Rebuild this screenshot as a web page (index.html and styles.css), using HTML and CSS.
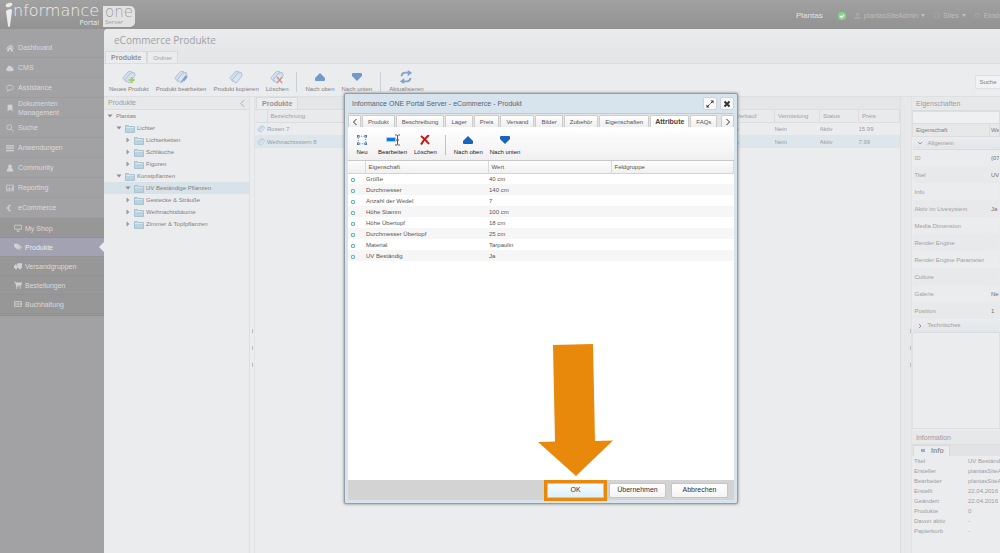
FILE: index.html
```html
<!DOCTYPE html>
<html lang="de">
<head>
	<meta charset="UTF-8">
	<title>Informance ONE Portal Server</title>
	<link rel="stylesheet" href="styles.css">
</head>
<body>

<!-- shared icons -->
<svg class="defs" width="0" height="0" aria-hidden="true">
	<symbol id="tag" viewBox="0 0 16 16">
		<path d="M1 9 7 2l4-.5 1 3.500-6 7.500-2 .5z" fill="#d3deea" stroke="#a9bfd8"/>
		<path d="m4 11 6-7.500 4-.5 1 3.500L9 14l-2 .5z" fill="#dbe5ef" stroke="#a3bcd8"/>
		<circle cx="12" cy="5.500" r="1" fill="#fff" stroke="#a3bcd8" stroke-width=".5"/>
	</symbol>
	<symbol id="folder" viewBox="0 0 10 9">
		<path d="M.5 1.500h3l1 1h5v6h-9z" fill="#bcd3df" stroke="#a9c3d1"/>
		<path d="M1 3.500h8" stroke="#d9e6ed"/>
	</symbol>
	<symbol id="up" viewBox="0 0 10 8"><path d="M5 0 10 5v2q0 1-1 1H1q-1 0-1-1V5z" fill="currentColor"/></symbol>
	<symbol id="down" viewBox="0 0 10 8"><path d="M5 8 0 3V1q0-1 1-1h8q1 0 1 1v2z" fill="currentColor"/></symbol>
	<symbol id="cross" viewBox="0 0 10 10"><path d="M1 1q4 3 8 8M9 0Q4 4 1 9.500" fill="none" stroke="currentColor" stroke-width="2"/></symbol>
	<symbol id="open" viewBox="0 0 6 6"><path d="M.5 1.500h5L3 4.500z" fill="#8d8e90"/></symbol>
	<symbol id="closed" viewBox="0 0 6 6"><path d="M1.500.5v5l3-2.500z" fill="#97989a"/></symbol>
</svg>

<header class="top">
	<a class="logo" href="#" aria-label="informance one Portal Server">
		<svg class="logo-i" viewBox="0 0 8 26"><ellipse cx="4" cy="3" rx="3.500" ry="2" transform="rotate(-20 4 3)"/><path d="M1 9q2-2 5-2 1 0 1 2L5 24q-1 2-2 0z"/></svg>
		<span class="logo-left">nformance<small>Portal</small></span>
		<span class="logo-right">one<small>Server</small></span>
	</a>
	<nav class="top-nav">
		<span class="site">Plantas</span>
		<svg class="ok" viewBox="0 0 8 8"><circle cx="4" cy="4" r="4" fill="#86d68b"/><path d="m2 4 1.500 1.500L6 3" fill="none" stroke="#fff" stroke-width="1.200"/></svg>
		<a href="#"><svg viewBox="0 0 8 8"><circle cx="4" cy="2.500" r="2"/><path d="M0 8q0-3 4-3t4 3z"/></svg>plantasSiteAdmin<i class="caret"></i></a>
		<a href="#"><svg viewBox="0 0 8 8"><circle cx="4" cy="4" r="3" class="ring"/></svg>Sites<i class="caret"></i></a>
		<a href="#"><svg viewBox="0 0 8 8"><circle cx="4" cy="4" r="2.500" class="ring"/></svg>Einstellungen</a>
	</nav>
</header>

<div class="app">
	<nav class="side">
		<ul>
			<li><a href="#"><svg viewBox="0 0 10 10"><path d="M5 1 0 5.500l.7.700L5 2.500l4.300 3.700.7-.7-2-1.800V1H7v1.700zM5 3.500 1.500 6.500V9.500H4V7h2v2.500h2.500v-3z"/></svg>Dashboard</a></li>
			<li><a href="#"><svg viewBox="0 0 10 10"><path d="M2.500 9a2.300 2.300 0 0 1-1-4.300 3 3 0 0 1 5.500-1 2 2 0 0 1 2 2A2 2 0 0 1 8 9z"/></svg>CMS</a></li>
			<li><a href="#"><svg viewBox="0 0 10 10"><path d="M5 1.500c6 0 6 6 0 6H4L2 9V7C-1 5 1 1.500 5 1.500z" class="line"/></svg>Assistance</a></li>
			<li><a href="#"><svg viewBox="0 0 10 10"><path d="M2 1h6v8.500L5 6.500l-3 3z"/></svg><span>Dokumenten Management</span></a></li>
			<li><a href="#"><svg viewBox="0 0 10 10"><circle cx="4" cy="4" r="3" class="line"/><path d="m6 6 3.500 3.500" class="line"/></svg>Suche</a></li>
			<li><a href="#"><svg viewBox="0 0 10 10"><path d="M0 1.500h10V3H0zM0 4.500h10V6H0zM0 7.500h10V9H0z"/></svg>Anwendungen</a></li>
			<li><a href="#"><svg viewBox="0 0 10 10"><circle cx="5" cy="3" r="2.300"/><path d="M1 9.500q0-4 2.500-4.500h3Q9 5.500 9 9.500z"/></svg>Community</a></li>
			<li><a href="#"><svg viewBox="0 0 10 10"><path d="M.5 1.500h9v7h-9z" class="line"/><path d="M2 5h1v2.500H2zM4 4h1v3.500H4zM6 5h1v2.500H6zM7.500 3h1v4.500h-1z"/></svg>Reporting</a></li>
			<li><a href="#"><svg viewBox="0 0 10 10"><path d="M6 1.700C1.500.5 1.500 9.500 6 8.300" class="line thick"/><path d="M0 4h5v.8H0zM0 5.600h4.500v.8H0z"/></svg>eCommerce</a></li>
		</ul>
		<ul class="sub">
			<li><a href="#"><svg viewBox="0 0 10 10"><path d="M.5 1.500h9v5h-9zM3 9h4M5 7v2" class="line"/></svg>My Shop</a></li>
			<li class="active"><a href="#"><svg viewBox="0 0 10 10"><path d="M0 1h3.500l4 4L5 8.500l-5-4zM5 1l4.800 4L7 8.800l-.7-.7L8 5 4 1z"/></svg>Produkte</a></li>
			<li><a href="#"><svg viewBox="0 0 10 10"><path d="M4 1.500h6v6H4zM1.500 3H3.500v4.500H0V5z"/><circle cx="2.500" cy="8" r="1.300"/><circle cx="7.500" cy="8" r="1.300"/></svg>Versandgruppen</a></li>
			<li><a href="#"><svg viewBox="0 0 10 10"><path d="M0 1h2l.5 1H10L9 5.500 3.500 6v.8H9v.7H2.700L1.500 2H0z"/><circle cx="3.500" cy="8.800" r="1"/><circle cx="8" cy="8.800" r="1"/></svg>Bestellungen</a></li>
			<li><a href="#"><svg viewBox="0 0 10 10"><path d="M.5 2h9v6h-9z" class="line"/><circle cx="5" cy="5" r="1.500" class="line"/><path d="M1 3.500h1v3H1zM8 3.500h1v3H8z"/></svg>Buchhaltung</a></li>
		</ul>
	</nav>

	<main class="main">
		<h1>eCommerce Produkte</h1>
		<div class="tabs main-tabs">
			<button class="tab on">Produkte</button>
			<button class="tab">Ordner</button>
		</div>
		<div class="toolbar">
			<button><svg viewBox="0 0 16 16"><use href="#tag"/><path d="M11 8v7M7.500 11.500h7" stroke="#a5cf74" stroke-width="2.500"/></svg>Neues Produkt</button>
			<button><svg viewBox="0 0 16 16"><use href="#tag"/><path d="m14.500 7-4 5" stroke="#7f9ecb" stroke-width="3"/><path d="M8 14l1-3 2 2z" fill="#7f9ecb"/></svg>Produkt bearbeiten</button>
			<button><svg viewBox="0 0 16 16"><use href="#tag"/></svg>Produkt kopieren</button>
			<button><svg viewBox="0 0 16 16"><use href="#tag"/><path d="m8 8 6 7m0-7-6 7" stroke="#d88d88" stroke-width="1.500"/></svg>Löschen</button>
			<i class="sep"></i>
			<button><svg class="arr" viewBox="0 0 10 8"><use href="#up"/></svg>Nach oben</button>
			<button><svg class="arr" viewBox="0 0 10 8"><use href="#down"/></svg>Nach unten</button>
			<i class="sep"></i>
			<button><svg viewBox="0 0 16 16"><path d="M3 7q0-4 5-4h3M13 9q0 4-5 4H5" fill="none" stroke="#83a4cd" stroke-width="2.200"/><path d="m10 0 5 3-5 4zM6 9l-5 4 5 3z" fill="#83a4cd"/></svg>Aktualisieren</button>
			<button class="search">Suche</button>
		</div>

		<div class="work">
			<section class="tree">
				<h2>Produkte<svg viewBox="0 0 6 8"><path d="M5 0 1 4l4 4" fill="none" stroke="#9fa0a2"/></svg></h2>
				<ul>
					<li><svg class="tw"><use href="#open"/></svg>Plantas</li>
					<li class="l1"><svg class="tw"><use href="#open"/></svg><svg class="fo"><use href="#folder"/></svg>Lichter</li>
					<li class="l2"><svg class="tw"><use href="#closed"/></svg><svg class="fo"><use href="#folder"/></svg>Lichterketten</li>
					<li class="l2"><svg class="tw"><use href="#closed"/></svg><svg class="fo"><use href="#folder"/></svg>Schläuche</li>
					<li class="l2"><svg class="tw"><use href="#closed"/></svg><svg class="fo"><use href="#folder"/></svg>Figuren</li>
					<li class="l1"><svg class="tw"><use href="#open"/></svg><svg class="fo"><use href="#folder"/></svg>Kunstpflanzen</li>
					<li class="l2 sel"><svg class="tw"><use href="#open"/></svg><svg class="fo"><use href="#folder"/></svg>UV Beständige Pflanzen</li>
					<li class="l2"><svg class="tw"><use href="#closed"/></svg><svg class="fo"><use href="#folder"/></svg>Gestecke &amp; Sträuße</li>
					<li class="l2"><svg class="tw"><use href="#closed"/></svg><svg class="fo"><use href="#folder"/></svg>Weihnachtsbäume</li>
					<li class="l2"><svg class="tw"><use href="#closed"/></svg><svg class="fo"><use href="#folder"/></svg>Zimmer &amp; Topfpflanzen</li>
				</ul>
			</section>
			<div class="split"><i></i><i></i><i></i></div>

			<section class="list">
				<div class="tabs list-tabs"><button class="tab on">Produkte</button></div>
				<table class="grid">
					<colgroup><col class="c-icon"><col><col class="c-sale"><col class="c-rent"><col class="c-state"><col class="c-price"></colgroup>
					<thead><tr><th></th><th>Bezeichnung</th><th>Verkauf</th><th>Vermietung</th><th>Status</th><th>Preis</th></tr></thead>
					<tbody>
						<tr><td><svg class="mini"><use href="#tag"/></svg></td><td>Rosen 7</td><td>Ja</td><td>Nein</td><td>Aktiv</td><td>15.99</td></tr>
						<tr class="sel"><td><svg class="mini"><use href="#tag"/></svg></td><td>Weihnachtsstern 8</td><td>Ja</td><td>Nein</td><td>Aktiv</td><td>7.99</td></tr>
					</tbody>
				</table>
			</section>
			<div class="split wide"><i></i><i></i><i></i></div>

			<aside class="props">
				<h2>Eigenschaften</h2>
				<input class="filter" type="text" aria-label="Filter">
				<table class="prop-table">
					<thead><tr><th>Eigenschaft</th><th>We</th></tr></thead>
					<tbody>
						<tr class="group"><td colspan="2"><svg viewBox="0 0 6 6"><path d="m1 2 2 2 2-2"/></svg>Allgemein</td></tr>
						<tr><td>ID</td><td class="val">{07</td></tr>
						<tr><td>Titel</td><td class="val">UV</td></tr>
						<tr><td>Info</td><td></td></tr>
						<tr><td>Aktiv im Livesystem</td><td class="val">Ja</td></tr>
						<tr><td>Media Dimension</td><td></td></tr>
						<tr><td>Render Engine</td><td></td></tr>
						<tr><td>Render Engine Parameter</td><td></td></tr>
						<tr><td>Culture</td><td></td></tr>
						<tr><td>Galerie</td><td class="val">Ne</td></tr>
						<tr><td>Position</td><td class="val">1</td></tr>
						<tr class="group"><td colspan="2"><svg viewBox="0 0 6 6"><path d="m2 1 2 2-2 2"/></svg>Technisches</td></tr>
					</tbody>
				</table>
				<div class="rest"></div>
				<h2 class="info-head">Information</h2>
				<div class="tabs info-tabs"><button class="tab on"><i></i>Info</button></div>
				<table class="info">
					<tr><td>Titel</td><td>UV Beständige Pflanzen</td></tr>
					<tr><td>Ersteller</td><td>plantasSiteAdmin</td></tr>
					<tr><td>Bearbeiter</td><td>plantasSiteAdmin</td></tr>
					<tr><td>Erstellt</td><td>22.04.2016</td></tr>
					<tr><td>Geändert</td><td>22.04.2016</td></tr>
					<tr><td>Produkte</td><td>0</td></tr>
					<tr><td>Davon aktiv</td><td>-</td></tr>
					<tr><td>Papierkorb</td><td>-</td></tr>
				</table>
			</aside>
		</div>
	</main>
</div>

<div class="dialog" role="dialog" aria-labelledby="dlg-title">
	<div class="dlg-title">
		<span id="dlg-title">Informance ONE Portal Server - eCommerce - Produkt</span>
		<button aria-label="Maximieren"><svg viewBox="0 0 8 8"><path d="M1.500 6.500l5-5" stroke="#333" stroke-dasharray="3 1.100"/><path d="M4.500.5h3v3zM.5 4.500v3h3z" fill="#333"/></svg></button>
		<button aria-label="Schließen"><svg viewBox="0 0 8 8"><path d="m1.500 1.500 5 5m0-5-5 5" stroke="#333" stroke-width="2"/></svg></button>
	</div>
	<div class="tabs dlg-tabs">
		<button class="tab scroll" aria-label="Zurück"><svg viewBox="0 0 6 8"><path d="M4.500 1 1.500 4l3 3"/></svg></button>
		<button class="tab">Produkt</button>
		<button class="tab">Beschreibung</button>
		<button class="tab">Lager</button>
		<button class="tab">Preis</button>
		<button class="tab">Versand</button>
		<button class="tab">Bilder</button>
		<button class="tab">Zubehör</button>
		<button class="tab">Eigenschaften</button>
		<button class="tab on">Attribute</button>
		<button class="tab">FAQs</button>
		<button class="tab scroll next" aria-label="Weiter"><svg viewBox="0 0 6 8"><path d="m1.500 1 3 3-3 3"/></svg></button>
	</div>
	<div class="toolbar">
		<button><svg class="arr" viewBox="0 0 12 12"><path d="M1.500 1.500h9v9h-9z" fill="none" stroke="#5b83bd" stroke-dasharray="1.500 1.500"/><path d="M0 0h3v3H0zM9 0h3v3H9zM0 9h3v3H0zM9 9h3v3H9z" fill="#3d70bb"/><path d="M1 1h1v1H1zM10 1h1v1h-1zM1 10h1v1H1zM10 10h1v1h-1z" fill="#fff"/></svg>Neu</button>
		<button><svg viewBox="0 0 14 12"><path d="M0 3h10v5H0z" fill="#a9cef5"/><path d="M1 4h8v3H1z" fill="#0b79ee"/><path d="M9 1h1.500l1 .5 1-.5H14M11.500 1.500v9M9 11h1.500l1-.5 1 .5H14M10 6h3" fill="none" stroke="#555"/></svg>Bearbeiten</button>
		<button class="red"><svg class="arr" viewBox="0 0 10 10"><use href="#cross"/></svg>Löschen</button>
		<i class="sep"></i>
		<button><svg class="arr" viewBox="0 0 10 8"><use href="#up"/></svg>Nach oben</button>
		<button><svg class="arr" viewBox="0 0 10 8"><use href="#down"/></svg>Nach unten</button>
	</div>
	<div class="dlg-body">
		<table class="attr">
			<colgroup><col class="a-icon"><col class="a-name"><col class="a-val"><col></colgroup>
			<thead><tr><th></th><th>Eigenschaft</th><th>Wert</th><th>Feldgruppe</th></tr></thead>
			<tbody>
				<tr><td><i></i></td><td>Größe</td><td>40 cm</td><td></td></tr>
				<tr><td><i></i></td><td>Durchmesser</td><td>140 cm</td><td></td></tr>
				<tr><td><i></i></td><td>Anzahl der Wedel</td><td>7</td><td></td></tr>
				<tr><td><i></i></td><td>Höhe Stamm</td><td>100 cm</td><td></td></tr>
				<tr><td><i></i></td><td>Höhe Übertopf</td><td>18 cm</td><td></td></tr>
				<tr><td><i></i></td><td>Durchmesser Übertopf</td><td>25 cm</td><td></td></tr>
				<tr><td><i></i></td><td>Material</td><td>Tarpaulin</td><td></td></tr>
				<tr><td><i></i></td><td>UV Beständig</td><td>Ja</td><td></td></tr>
			</tbody>
		</table>
	</div>
	<div class="dlg-foot">
		<button class="primary">OK</button>
		<button>Übernehmen</button>
		<button>Abbrechen</button>
	</div>
	<svg class="pointer" viewBox="0 0 75 133" aria-hidden="true"><path d="M15 1 55 0l2 97 18-.5L38 132 0 98l17-.5z" fill="#e8890c"/></svg>
</div>

</body>
</html>
```
FILE: styles.css
```css
* {
	box-sizing: border-box;
}
body {
	margin: 0;
	min-height: 100vh;
	display: flex;
	flex-direction: column;
	overflow: hidden;
	background: #a2a2a4;
	font: 6px/10px "Liberation Sans", Arial, sans-serif;
	color: #808183;
	white-space: nowrap;
}
ul {
	list-style: none;
	margin: 0;
	padding: 0;
}
a {
	color: inherit;
	text-decoration: none;
}
button,
input {
	font: inherit;
	color: inherit;
	margin: 0;
	padding: 0;
	border: 0;
	background: none;
}
svg {
	display: block;
	flex: none;
}
table {
	border-collapse: collapse;
	table-layout: fixed;
	width: 100%;
}
th,
td {
	padding: 0;
	text-align: left;
	font-weight: normal;
	overflow: hidden;
}
h1,
h2 {
	margin: 0;
	font-weight: normal;
}
.defs {
	position: absolute;
}

/* top bar */
.top {
	height: 29px;
	display: flex;
	justify-content: space-between;
	background: linear-gradient(#a1a1a2, #929293);
}
.logo {
	display: flex;
	padding-left: 5px;
	color: #ebebec;
	font: 200 16px/16px "DejaVu Sans", sans-serif;
}
.logo small {
	display: block;
	font: 7px/8px "Open Sans", sans-serif;
}
.logo-i {
	width: 8px;
	height: 26px;
	margin-top: 2px;
	fill: #ebebec;
}
.logo-left {
	padding-top: 3px;
	text-align: right;
}
.logo-right {
	height: 21px;
	margin: 6px 0 0 4px;
	padding: 0 2px;
	background: #e2e2e3;
	border-radius: 0 5px 5px 0;
	color: #a0a0a2;
	font-size: 15px;
	line-height: 13px;
}
.logo-right small {
	font-size: 6px;
	line-height: 7px;
}
.top-nav {
	width: 204px;
	display: flex;
	align-items: center;
	gap: 8px;
	padding-top: 2px;
	overflow: hidden;
	font-size: 7px;
	color: #bdbdbe;
}
.top-nav a {
	display: flex;
	align-items: center;
	gap: 3px;
}
.top-nav svg {
	width: 7px;
	height: 7px;
	fill: #a6a6a7;
}
.top-nav .ok {
	width: 8px;
	height: 8px;
	margin-left: 7px;
}
.top-nav .ring {
	fill: none;
	stroke: #a8a8a9;
}
.site {
	font: 8px/10px "Liberation Sans", Arial, sans-serif;
	color: #e2e2e3;
}
.caret {
	border: 2px solid transparent;
	border-top: 3px solid #c0c0c1;
	border-bottom: 0;
}

/* side menu */
.app {
	flex: 1;
	display: flex;
}
.side {
	width: 104px;
	flex: none;
	padding-top: 9px;
	font-size: 7px;
	line-height: 9px;
	color: #dadadb;
}
.side a {
	height: 20px;
	display: flex;
	align-items: center;
	gap: 4px;
	padding-left: 6px;
	border-bottom: 1px solid #9c9c9e;
}
.side span {
	white-space: normal;
	width: 50px;
}
.side svg {
	width: 8px;
	height: 8px;
	fill: #d2d2d3;
}
.side .line {
	fill: none;
	stroke: #d2d2d3;
}
.side .thick {
	stroke-width: 1.5;
}
.sub {
	padding: 1px 0;
	background: #979798;
	border-bottom: 1px solid #8e8e90;
}
.sub a {
	height: 19px;
	gap: 3px;
	padding-left: 14px;
	border-bottom-color: #929294;
}
.sub .active a {
	position: relative;
	background: #a2a2b2;
	color: #ededf0;
}
.sub .active a:after {
	content: "";
	position: absolute;
	right: 0;
	top: 4px;
	border: 5px solid transparent;
	border-left: 0;
	border-right-color: #ebecee;
}

/* tabs and toolbars */
.tabs {
	display: flex;
	align-items: flex-end;
}
.tab {
	height: 12px;
	padding: 0 5px;
	border: 1px solid #d9dadc;
	border-bottom: 0;
	background: #ebecee;
	color: #a0a1a3;
}
.tab.on {
	font-size: 7px;
	font-weight: bold;
	color: #949597;
}
.toolbar {
	height: 33px;
	display: flex;
	align-items: center;
	gap: 1px;
	padding: 3px 2px 0;
	border-bottom: 1px solid #dedfe1;
}
.toolbar button {
	min-width: 24px;
	display: flex;
	flex-direction: column;
	align-items: center;
	padding: 0 3px;
}
.toolbar svg {
	width: 14px;
	height: 14px;
}
.toolbar .arr {
	width: 10px;
	height: 10px;
	margin: 2px 0;
	color: #7398cc;
}
.sep {
	width: 1px;
	height: 20px;
	margin: 0 4px;
	background: #c9d0d8;
}
.toolbar .search {
	height: 14px;
	width: 25px;
	margin: 0 -2px 0 auto;
	border: 1px solid #dfe0e1;
	border-right: 0;
	background: #f1f2f3;
	justify-content: center;
}

/* main area */
.main {
	flex: 1;
	min-width: 0;
	display: flex;
	flex-direction: column;
	background: #ebecee;
	border-top-left-radius: 4px;
}
.main h1 {
	height: 22px;
	padding-left: 10px;
	background: linear-gradient(#ebecee, #e5e6e8);
	border-top-left-radius: 4px;
	font: 10px/22px "Open Sans", sans-serif;
	color: #a0a1a3;
}
.main-tabs {
	height: 13px;
	padding-left: 1px;
	background: #e5e6e8;
	border-bottom: 1px solid #dcdddf;
}
.main h2 {
	height: 13px;
	padding: 0 4px;
	border-bottom: 1px solid #dcdddf;
	background: #e7e8ea;
	font-size: 7px;
	line-height: 14px;
	color: #9d9ea0;
}
.work {
	flex: 1;
	display: flex;
}
.tree {
	width: 146px;
	flex: none;
	border-right: 1px solid #dddee0;
}
.main .tree h2 {
	display: flex;
	align-items: center;
	justify-content: space-between;
}
.tree h2 svg {
	width: 5px;
	height: 7px;
}
.tree li {
	height: 12px;
	display: flex;
	align-items: center;
	padding-left: 3px;
}
.tree .l1 {
	padding-left: 12px;
}
.tree .l2 {
	padding-left: 21px;
}
.tree .sel {
	background: #d8e2e9;
}
.tw {
	width: 6px;
	height: 6px;
	margin-right: 3px;
}
.fo {
	width: 10px;
	height: 9px;
	margin-right: 2px;
}
.split {
	width: 5px;
	display: flex;
	flex-direction: column;
	align-items: center;
	justify-content: center;
	gap: 13px;
	padding-top: 46px;
	border-right: 1px solid #e1e2e4;
}
.split i {
	width: 1px;
	height: 4px;
	background: #bdbec0;
}
.split.wide {
	width: 12px;
	padding-left: 9px;
	border-left: 1px solid #dddee0;
	background: #e7e8ea;
}
.list {
	flex: 1;
}
.list-tabs {
	height: 13px;
	padding-left: 1px;
	background: #e5e6e8;
	border-bottom: 1px solid #dcdddf;
}
.grid th {
	height: 12px;
	padding-left: 3px;
	background: #e9eaec;
	border-right: 1px solid #dcdddf;
	border-bottom: 1px solid #dcdddf;
	color: #a0a1a3;
}
.grid td {
	height: 13px;
	color: #9b9c9e;
}
.grid .sel {
	background: #dce6eb;
}
.c-icon {
	width: 12px;
}
.c-sale {
	width: 42px;
}
.c-rent {
	width: 45px;
}
.c-state {
	width: 39px;
}
.c-price {
	width: 41px;
}
.mini {
	width: 8px;
	height: 8px;
	margin-left: 2px;
}

/* properties */
.props {
	width: 88px;
	flex: none;
	overflow: hidden;
}
.main .props h2 {
	height: 14px;
}
.filter {
	display: block;
	width: 100%;
	height: 13px;
	border: 1px solid #dcdddf;
	background: #eff0f1;
}
.prop-table th {
	height: 12px;
	padding-left: 3px;
	border: 1px solid #dcdddf;
	border-top: 0;
	background: #e7e8ea;
}
.prop-table th:last-child {
	width: 10px;
	padding-left: 1px;
}
.prop-table td {
	height: 17px;
	padding-left: 2px;
	border-right: 1px solid #e9eaec;
	color: #9fa0a2;
}
.prop-table tr:nth-child(odd) td {
	background: #e8e9eb;
}
.prop-table .val {
	padding-left: 1px;
	color: #707173;
}
.prop-table tr.group td {
	height: 13px;
	background: linear-gradient(#ebecee, #e1e5ea);
	border-bottom: 1px solid #d7dce1;
}
.group svg {
	display: inline-block;
	width: 6px;
	height: 6px;
	margin: 0 5px 0 2px;
	vertical-align: middle;
	fill: none;
	stroke: #999a9c;
}
.rest {
	height: 96px;
	border: 1px solid #dedfe1;
	border-top: 0;
	margin-bottom: 2px;
}
.info-tabs {
	padding: 0 1px;
	height: 11px;
	background: #e2e3e5;
}
.info-tabs .tab {
	height: 11px;
}
.info-tabs i {
	display: inline-block;
	width: 4px;
	height: 3px;
	margin: 0 6px 1px 2px;
	background: #8fb2cf;
}
.info td {
	height: 10px;
	padding-left: 2px;
	color: #9c9d9f;
}
.info td:last-child {
	width: 34px;
}

/* dialog */
.dialog {
	position: absolute;
	left: 344px;
	top: 93px;
	width: 394px;
	height: 411px;
	display: flex;
	flex-direction: column;
	padding: 0 3px 3px;
	border: 1px solid #969ca3;
	border-radius: 2px;
	background: #d8e4ed;
	box-shadow: 0 0 3px #77797c;
	color: #555;
}
.dlg-title {
	height: 19px;
	display: flex;
	align-items: center;
	gap: 3px;
	padding: 0 0 0 4px;
	font-size: 7px;
	color: #59636d;
}
.dlg-title span {
	flex: 1;
}
.dlg-title button {
	width: 14px;
	height: 13px;
	display: flex;
	align-items: center;
	justify-content: center;
	border: 1px solid #d0d4d8;
	border-radius: 2px;
	background: #f8f8f8;
}
.dlg-title svg {
	width: 8px;
	height: 8px;
}
.dlg-tabs {
	height: 14px;
	gap: 1px;
	background: #e4e4e4;
	border-top: 1px solid #c4c9cd;
}
.dlg-tabs .tab {
	border-color: #cdcdcd;
	border-radius: 2px 2px 0 0;
	background: linear-gradient(#fff, #efefef);
	color: #555;
}
.dlg-tabs .tab.on {
	padding: 0 4px;
	background: #fff;
	color: #444;
}
.dlg-tabs .scroll {
	width: 13px;
	padding: 0 3px;
}
.dlg-tabs .next {
	margin-left: auto;
}
.scroll svg {
	width: 6px;
	height: 8px;
	fill: none;
	stroke: #333;
}
.dialog .toolbar {
	height: 34px;
	background: linear-gradient(#fff, #f0f0f0);
	border-bottom-color: #c8c8c8;
	color: #222;
}
.dialog .toolbar .arr {
	color: #1b62bd;
}
.dialog .toolbar .red .arr {
	color: #c6150f;
}
.dialog .sep {
	background: #b5c6d8;
}
.dlg-body {
	flex: 1;
	background: #fff;
}
.attr th {
	height: 12px;
	padding-left: 3px;
	background: linear-gradient(#fcfcfc, #f0f0f0);
	border-right: 1px solid #d9d9d9;
	border-bottom: 1px solid #d4d4d4;
}
.attr td {
	height: 11px;
	padding-left: 1px;
}
.attr tr:nth-child(even) td {
	background: #f6f6f6;
}
.attr i {
	display: block;
	width: 4px;
	height: 4px;
	margin: 2px 0 0 2px;
	border: 1px solid #69b5bb;
	border-radius: 1px;
	background: #dff3f4;
}
.a-icon {
	width: 17px;
}
.a-name {
	width: 123px;
}
.a-val {
	width: 123px;
}
.dlg-foot {
	height: 20px;
	display: flex;
	align-items: center;
	justify-content: flex-end;
	gap: 5px;
	padding-right: 6px;
	background: #d3d3d3;
	font-size: 7px;
	color: #333;
}
.dlg-foot button {
	width: 57px;
	height: 15px;
	border: 1px solid #c6c6c6;
	border-radius: 2px;
	background: linear-gradient(#fff, #f3f3f3);
}
.dlg-foot .primary {
	border-color: #a9cfe0;
	border-radius: 0;
	outline: 3px solid #e8890c;
	background: linear-gradient(#f6fcff, #dcf0fa);
}
.pointer {
	position: absolute;
	left: 193px;
	top: 250px;
	width: 75px;
	height: 133px;
}
```
